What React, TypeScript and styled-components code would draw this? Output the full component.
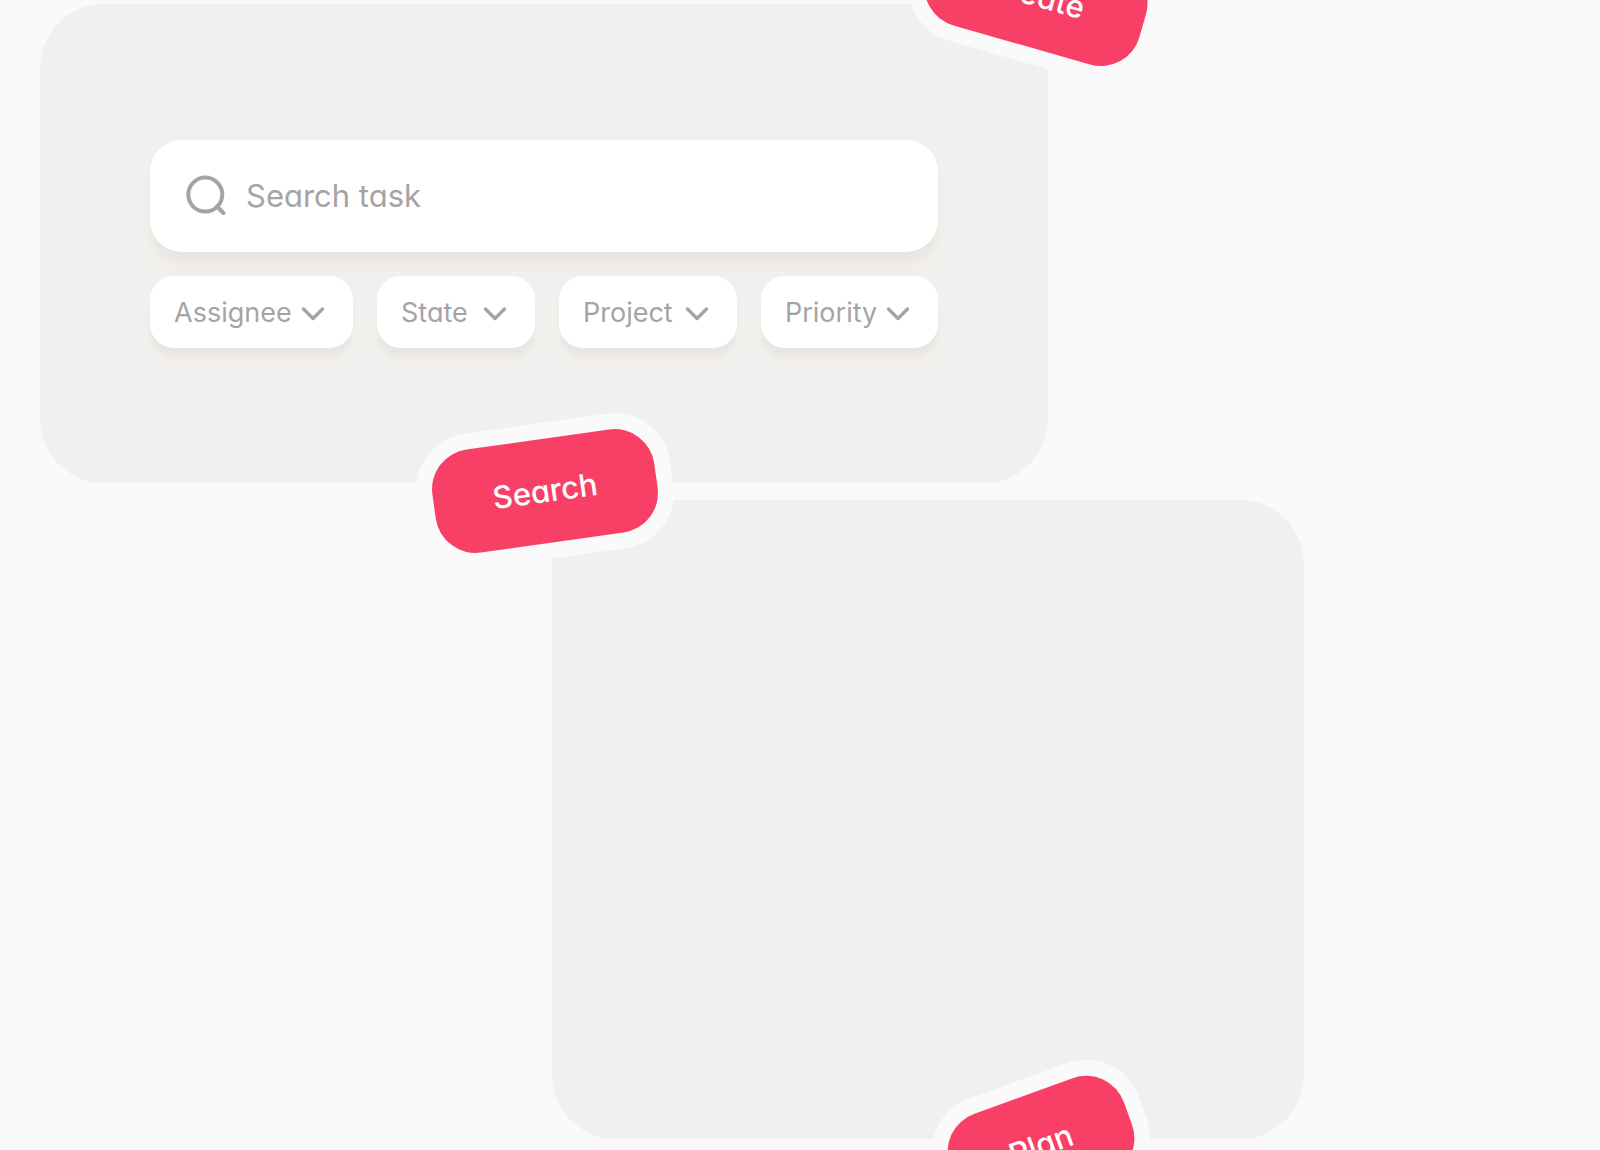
import React from "react";
import styled, { createGlobalStyle } from "styled-components";

const color = {
  page: "#fafafa",
  panel: "#f1f0ee",
  surface: "#ffffff",
  muted: "#a5a4a3",
  accent: "#f84066",
};

const GlobalStyle = createGlobalStyle`
  *, *::before, *::after { box-sizing: border-box; }
  body {
    margin: 0;
    background: ${color.page};
    font-family: Inter, "Liberation Sans", sans-serif;
    font-feature-settings: "cv11";
  }
  button, input, select { font: inherit; font-feature-settings: inherit; }
`;

const Page = styled.main`
  min-height: 100vh;
  padding: 4px 40px 0;
  overflow: hidden;
`;

const Board = styled.div`
  display: flex;
  flex-direction: column;
  gap: 17px;
  max-width: 1264px;
`;

const Panel = styled.section<{ $align: string; $width: number; $minHeight?: number }>`
  position: relative;
  align-self: ${(p) => p.$align};
  width: 100%;
  max-width: ${(p) => p.$width}px;
  min-height: ${(p) => p.$minHeight ?? 0}px;
  border-radius: 64px;
  background: ${color.panel};
`;

const SearchForm = styled.form`
  display: flex;
  flex-direction: column;
  gap: 24px;
  padding: 136px 110px 135px;
`;

const SearchBox = styled.label`
  display: flex;
  align-items: center;
  gap: 16px;
  height: 112px;
  padding: 0 32px;
  border-radius: 32px;
  background: ${color.surface};
  color: ${color.muted};
  box-shadow:
    0 8px 2px -4px #e5e5ec,
    0 12px 3px -2px #ece5e5,
    0 15px 6px 3px #eeede5;
`;

const SearchInput = styled.input`
  flex: 1;
  min-width: 0;
  padding: 0;
  border: 0;
  outline: 0;
  background: transparent;
  color: ${color.muted};
  font-size: 31px;
  line-height: 40px;

  &::placeholder {
    color: ${color.muted};
    opacity: 1;
  }
`;

const Filters = styled.div`
  display: grid;
  grid-template-columns: 203fr 158fr 178fr 177fr;
  gap: 24px;
`;

const Filter = styled.label`
  position: relative;
  display: flex;
  align-items: center;
  height: 72px;
  border-radius: 24px;
  background: ${color.surface};
  color: ${color.muted};
  box-shadow:
    0 8px 2px -4px #e5e5ec,
    0 10px 3px -2px #ece5e5,
    0 11px 6px 1px #eeede5;
`;

const FilterSelect = styled.select`
  appearance: none;
  width: 100%;
  height: 100%;
  padding: 2px 48px 0 24px;
  border: 0;
  outline: 0;
  border-radius: inherit;
  background: transparent;
  color: inherit;
  font-size: 27px;
  line-height: 36px;
`;

const Chevron = styled.svg`
  position: absolute;
  right: 24px;
  width: 32px;
  height: 32px;
  pointer-events: none;
`;

const Action = styled.button<{ $x: string; $y: string; $angle: number; $width: number }>`
  position: absolute;
  z-index: 1;
  left: ${(p) => p.$x};
  top: ${(p) => p.$y};
  width: ${(p) => p.$width}px;
  height: 104px;
  padding: 0;
  border: 0;
  border-radius: 40px;
  background: ${color.accent};
  box-shadow: 0 0 0 16px ${color.page};
  color: ${color.surface};
  font-size: 31px;
  font-weight: 500;
  line-height: 40px;
  cursor: pointer;
  transform: translate(-50%, -50%) rotate(${(p) => p.$angle}deg);
`;

const filters = ["Assignee", "State", "Project", "Priority"];

function SearchIcon() {
  return (
    <svg width="48" height="48" viewBox="0 0 48 48" fill="none" stroke="currentColor" strokeWidth="4" strokeLinecap="round" aria-hidden="true">
      <circle cx="23.3" cy="22.6" r="17" />
      <path d="M35 34.5 41.5 41" />
    </svg>
  );
}

export default function App() {
  return (
    <>
      <GlobalStyle />
      <Page>
        <Board>
          <Panel $align="flex-start" $width={1008}>
            <SearchForm onSubmit={(e) => e.preventDefault()}>
              <SearchBox>
                <SearchIcon />
                <SearchInput type="text" placeholder="Search task" aria-label="Search task" />
              </SearchBox>
              <Filters>
                {filters.map((name) => (
                  <Filter key={name}>
                    <FilterSelect aria-label={name}>
                      <option>{name}</option>
                    </FilterSelect>
                    <Chevron viewBox="0 0 32 32" fill="none" stroke="currentColor" strokeWidth="3.4" strokeLinecap="round" strokeLinejoin="round" aria-hidden="true">
                      <path d="M6.5 13 16 22.5 25.5 13" />
                    </Chevron>
                  </Filter>
                ))}
              </Filters>
            </SearchForm>
            <Action type="button" $x="calc(100% - 12px)" $y="-9px" $angle={16} $width={222}>Create</Action>
            <Action type="button" $x="calc(50% + 1px)" $y="487px" $angle={-8} $width={224}>Search</Action>
          </Panel>
          <Panel $align="flex-end" $width={752} $minHeight={639}>
            <Action type="button" $x="65%" $y="calc(100% + 6px)" $angle={-20} $width={185}>Plan</Action>
          </Panel>
        </Board>
      </Page>
    </>
  );
}
